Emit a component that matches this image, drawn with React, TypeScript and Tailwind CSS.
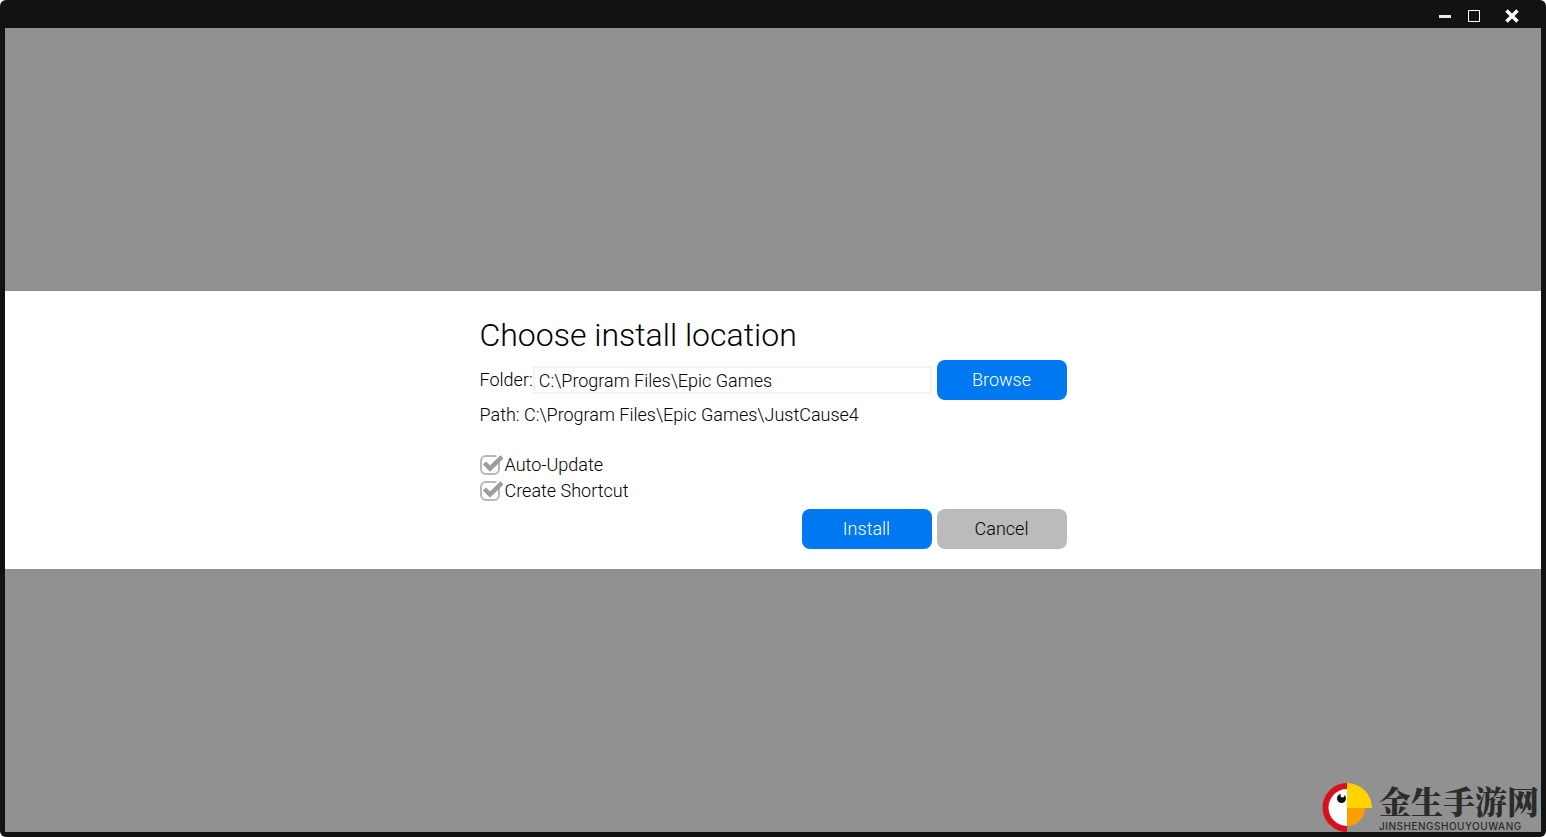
import { useId, useState } from 'react'

const GAME_FOLDER = 'JustCause4'

function TitleBar() {
        return (
                <header className="flex h-7 shrink-0 items-center justify-end gap-[9px] pt-1 pr-[19px] text-white">
                        <button type="button" aria-label="Minimize" className="flex size-5 items-center justify-center">
                                <svg width="12" height="12" viewBox="0 0 12 12">
                                        <path d="M0 5h12v3H0z" fill="#eee9e9" />
                                </svg>
                        </button>
                        <button type="button" aria-label="Maximize" className="flex size-5 items-center justify-center">
                                <svg width="12" height="12" viewBox="0 0 12 12">
                                        <path d="M.5.5h11v11H.5z" fill="none" stroke="currentColor" />
                                </svg>
                        </button>
                        <button type="button" aria-label="Close" className="ml-[9px] flex size-5 items-center justify-center">
                                <svg width="14" height="14" viewBox="0 0 14 14">
                                        <path d="M1.500 1.500l11 11M12.500 1.500l-11 11" fill="none" stroke="currentColor" strokeWidth="3.500" />
                                </svg>
                        </button>
                </header>
        )
}

function Option({ label }: { label: string }) {
        const id = useId()

        return (
                <div className="flex h-[26px] items-center gap-0.5">
                        <span className="relative flex h-5 w-[23px]">
                                <input
                                        id={id}
                                        type="checkbox"
                                        defaultChecked
                                        className="peer size-5 appearance-none rounded-md border-2 border-[#b8b8b8] bg-white"
                                />
                                <svg
                                        width="23"
                                        height="20"
                                        viewBox="0 0 23 20"
                                        className="pointer-events-none absolute inset-0 hidden peer-checked:block"
                                >
                                        <path d="M17 5L23 0" fill="none" stroke="#fff" strokeWidth="6" />
                                        <path d="M4.500 8l5.500 5.500L22 1.800" fill="none" stroke="#9d9d9d" strokeWidth="4.500" />
                                </svg>
                        </span>
                        <label htmlFor={id}>{label}</label>
                </div>
        )
}

function Watermark() {
        return (
                <div className="absolute right-1 bottom-0 flex items-end gap-[7px] text-[#2b2b2b]">
                        <svg width="50" height="49" viewBox="0 0 50 49">
                                <path d="M25 0a24.500 24.500 0 0 0 0 49z" fill="#d8101c" />
                                <path d="M25 6a18.500 18.500 0 0 0 0 37z" fill="#fff" />
                                <path d="M25 0a25 25 0 0 1 25 25H25z" fill="#ffd200" />
                                <path d="M25 25h18a18 18 0 0 1-18 18z" fill="#f7a000" />
                                <circle cx="19.500" cy="15.500" r="4.500" fill="#111" />
                                <circle cx="20.500" cy="12.500" r="2" fill="#fff" />
                        </svg>
                        <div className="flex w-[158px] flex-col font-['Noto_Serif_CJK_SC','Noto_Sans_CJK_SC',serif]">
                                <span className="text-[32px] leading-8 font-black whitespace-nowrap">金生手游网</span>
                                <span className="mt-1 font-[Inter,sans-serif] text-[10px] leading-3 font-medium tracking-wider">
                                        JINSHENGSHOUYOUWANG
                                </span>
                        </div>
                </div>
        )
}

export default function App() {
        const [folder, setFolder] = useState('C:\\Program Files\\Epic Games')

        return (
                <div className="flex h-screen flex-col overflow-hidden rounded-md bg-[#121212] px-[5px] pb-[5px] font-[Roboto,sans-serif] text-lg leading-5 font-light text-black">
                        <TitleBar />

                        <main className="relative flex flex-1 flex-col justify-center bg-[#919191]">
                                <section className="bg-white pt-6 pb-5">
                                        <form className="mx-auto w-[587px] max-w-full" onSubmit={(e) => e.preventDefault()}>
                                                <h1 className="text-[32px] leading-10">Choose install location</h1>

                                                <div className="mt-[5px] flex items-center">
                                                        <label htmlFor="folder">Folder:</label>
                                                        <input
                                                                id="folder"
                                                                type="text"
                                                                value={folder}
                                                                onChange={(e) => setFolder(e.target.value)}
                                                                className="mr-[5px] h-7 min-w-0 flex-1 border-2 border-[#f3f3f3] px-1 outline-none"
                                                        />
                                                        <button type="button" className="h-10 w-[130px] rounded-lg bg-[#0078f2] text-white">
                                                                Browse
                                                        </button>
                                                </div>

                                                <p className="mt-[5px]">
                                                        Path: {folder}\{GAME_FOLDER}
                                                </p>

                                                <div className="mt-[27px]">
                                                        <Option label="Auto-Update" />
                                                        <Option label="Create Shortcut" />
                                                </div>

                                                <div className="mt-[5px] flex justify-end gap-[5px]">
                                                        <button type="submit" className="h-10 w-[130px] rounded-lg bg-[#0078f2] text-white">
                                                                Install
                                                        </button>
                                                        <button type="button" className="h-10 w-[130px] rounded-lg bg-[#bbbbbb]">
                                                                Cancel
                                                        </button>
                                                </div>
                                        </form>
                                </section>

                                <Watermark />
                        </main>
                </div>
        )
}
